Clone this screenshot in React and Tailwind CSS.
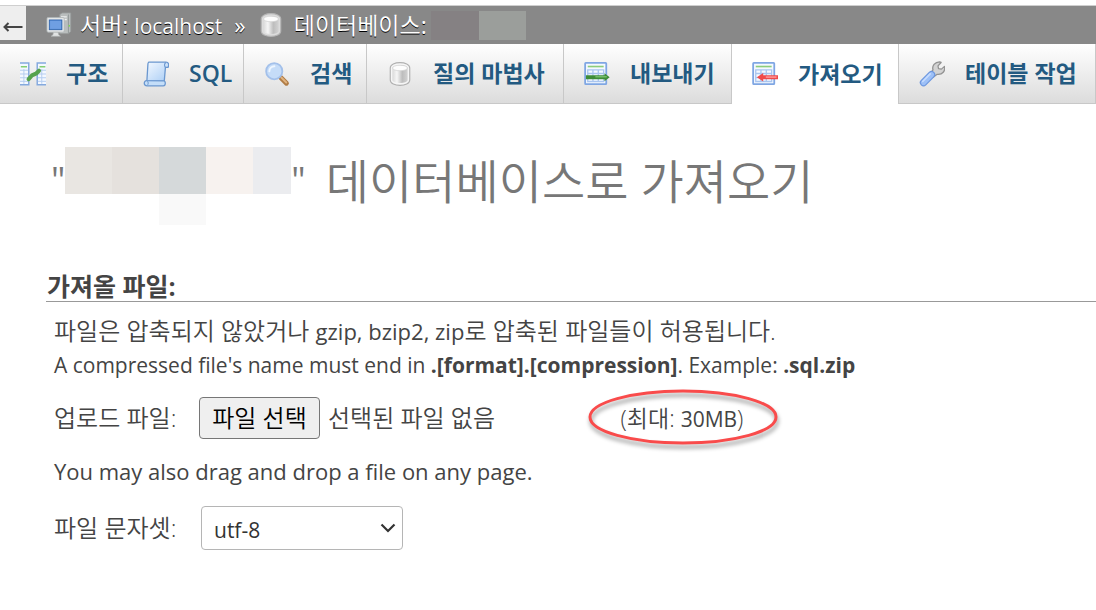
import { useRef, useState } from "react";

const ICON = "size-[26px] shrink-0";

function ServerIcon() {
  return (
    <svg viewBox="0 0 16 16" className={ICON} aria-hidden="true">
      <path d="M8.5 1.5 10 .6h5.2V12l-1.4 1.3H8.5z" fill="#b9bdbd" stroke="#9a9f9f" strokeWidth=".5" />
      <path d="M9.2 3h3.6M9.2 4.6h3.6" stroke="#eef0f0" strokeWidth=".8" />
      <path d="M13.8 1.5v11.6" stroke="#8b9191" strokeWidth=".5" />
      <path d="M13.9 8.5h.9" stroke="#7ed957" strokeWidth="1" />
      <rect x=".6" y="3.4" width="10.6" height="9" rx=".7" fill="#e6e8e8" stroke="#aeb4b6" strokeWidth=".5" />
      <rect x="2" y="4.9" width="7.8" height="6" fill="#4b83cf" stroke="#2f62a8" strokeWidth=".5" />
      <path d="M2.500 5.400h6.800v5H2.500z" fill="#6f9fe2" />
      <path d="M4.6 12.5h2.8l.4 1.5 1.1.9H3.2l1.1-.9z" fill="#e1e3e3" stroke="#b2b6b6" strokeWidth=".4" />
    </svg>
  );
}

function DatabaseIcon({ halo }) {
  return (
    <svg viewBox="0 0 16 16" className={ICON} aria-hidden="true">
      <defs>
        <linearGradient id="cyl" x1="0" x2="1" y1="0" y2="0">
          <stop offset="0" stopColor="#d9d9d9" />
          <stop offset=".3" stopColor="#f6f6f6" />
          <stop offset=".65" stopColor="#bdbdbd" />
          <stop offset="1" stopColor="#d2d2d2" />
        </linearGradient>
      </defs>
      <path
        d="M2 4.300c0-4.400 12-4.400 12 0v7.400c0 4.400-12 4.400-12 0z"
        fill={halo ? "#dcdcdc" : "#f6f6f6"}
        stroke={halo ? "#b5b5b5" : "#b0b0b0"}
        strokeWidth=".7"
      />
      <path d="M3.300 4.300c0-2.500 9.400-2.500 9.400 0v7.400c0 2.500-9.400 2.500-9.400 0z" fill="url(#cyl)" />
      <ellipse cx="8" cy="4.300" rx="4.600" ry="1.700" fill="#fdfdfd" stroke="#cdcdcd" strokeWidth=".4" />
    </svg>
  );
}

function StructureIcon() {
  return (
    <svg viewBox="0 0 16 16" className={ICON} aria-hidden="true">
      <path d="M0 1.2h5.4v13.4H0M16 1.2h-5.4v13.4H16" fill="#f3f8ff" stroke="#84a9de" strokeWidth=".9" />
      <path d="M.5 3.5h3.8M12 3.5h3.6" stroke="#83cf72" strokeWidth="1" />
      <path d="M0 5.7h5M0 8h5M0 10.3h5M0 12.5h5M11 5.7h5M11 8h5M11 10.3h5M11 12.5h5M2.4 5v9M13.4 5v9" stroke="#b4cdf0" strokeWidth=".6" />
      <path d="M5.300 11.200 7.300 8.900l2.500-1.100L11.700 6" fill="none" stroke="#56a24c" strokeWidth="2.500" strokeLinecap="round" strokeLinejoin="round" />
    </svg>
  );
}

function ScrollIcon() {
  return (
    <svg viewBox="0 0 16 16" className={ICON} aria-hidden="true">
      <defs>
        <linearGradient id="paper" x1="0" x2="1" y1="0" y2="1">
          <stop offset="0" stopColor="#f2f8ff" />
          <stop offset="1" stopColor="#a9cdf5" />
        </linearGradient>
      </defs>
      <path d="M3.500.7h10.700c1.700 0 1.900 1.800 1.200 3.200h-1.600l-.7 8.300H2.400L3 2.300C3 1.500 3.200 1 3.500.7z" fill="url(#paper)" stroke="#6a97cf" strokeWidth=".8" strokeLinejoin="round" />
      <path d="M13.800 3.900c-.9-1-.6-2.500.3-3" fill="none" stroke="#6a97cf" strokeWidth=".7" />
      <path d="M2.300 12.100c-1.900-.2-2.200 3.200.2 3.200h10c1.500 0 1.500-2.200.7-3.100z" fill="#c4def9" stroke="#6a97cf" strokeWidth=".8" strokeLinejoin="round" />
      <path d="M2.500 15c1-.7.9-2.200 0-2.800" fill="none" stroke="#6a97cf" strokeWidth=".6" />
    </svg>
  );
}

function SearchIcon() {
  return (
    <svg viewBox="0 0 16 16" className={ICON} aria-hidden="true">
      <path d="m10.300 10.200 3.500 3.500" stroke="#b07c45" strokeWidth="3" strokeLinecap="round" />
      <path d="m10.800 10.300 2.900 2.900" stroke="#e0b27e" strokeWidth="1.2" strokeLinecap="round" />
      <circle cx="6.300" cy="6.300" r="5" fill="#c5dcf8" stroke="#a3c0ea" strokeWidth="1.1" />
      <path d="M3.300 6.300a3.100 3.100 0 0 1 3.100-3.100" fill="none" stroke="#eef6ff" strokeWidth="1.2" strokeLinecap="round" />
    </svg>
  );
}

function SheetBase() {
  return (
    <>
      <rect x=".7" y="1.2" width="13" height="13" rx=".4" fill="#f5f9ff" stroke="#7fa6e3" strokeWidth="1.100" />
      <path d="M2.3 3.4h9.8" stroke="#8ccd7b" strokeWidth="1" />
      <path d="M2.3 5.4h9.8v7.2H2.3zM2.3 7.7h9.8M2.3 10.2h9.8M5.5 5.4v7.2M8.8 5.4v7.2" fill="none" stroke="#a9c5ef" strokeWidth=".8" />
    </>
  );
}

function ExportIcon() {
  return (
    <svg viewBox="0 0 16 16" className={ICON} aria-hidden="true">
      <SheetBase />
      <path d="M1.200 8.700h11.400V7.600l3.200 2.400-3.200 2.400v-1.100H1.200z" fill="#3e8d38" />
      <path d="M7 9.700h7" stroke="#7cc470" strokeWidth=".8" />
    </svg>
  );
}

function ImportIcon() {
  return (
    <svg viewBox="0 0 16 16" className={ICON} aria-hidden="true">
      <SheetBase />
      <path d="M16 8.700H6.900V7.400L3 10l3.900 2.600v-1.300H16z" fill="#f04a4a" />
      <path d="M8.500 9.900h6.600" stroke="#ff9a9a" strokeWidth=".9" />
    </svg>
  );
}

function WrenchIcon() {
  return (
    <svg viewBox="0 0 16 16" className={ICON} aria-hidden="true">
      <path d="M7 7.600 8.600 5.400C7.900 3 9.700.6 12.700.5l.9.4-1.900 2.100.3 1.700 1.800.3 1.900-1.700c.6 2.800-1.200 5.300-4.500 4.900L8.900 9.900z" fill="#d3d3d3" stroke="#939393" strokeWidth=".8" strokeLinejoin="round" />
      <path d="M2.800 13.300 7.700 8.400" stroke="#6d97de" strokeWidth="4.600" strokeLinecap="round" />
      <path d="M2.800 13.300 7.700 8.400" stroke="#9dc0f7" strokeWidth="3.200" strokeLinecap="round" />
      <path d="m2.300 12.600 4.600-4.700" stroke="#c6dcff" strokeWidth="1" strokeLinecap="round" />
    </svg>
  );
}

const TABS = [
  { label: "구조", Icon: StructureIcon },
  { label: "SQL", Icon: ScrollIcon },
  { label: "검색", Icon: SearchIcon },
  { label: "질의 마법사", Icon: DatabaseIcon },
  { label: "내보내기", Icon: ExportIcon },
  { label: "가져오기", Icon: ImportIcon, active: true },
  { label: "테이블 작업", Icon: WrenchIcon },
];

function Breadcrumb() {
  return (
    <header className="mt-[5px] flex h-[39px] items-center border-t border-[#cfcfcf] bg-[#888888] text-[23px] text-white">
      <button type="button" aria-label="탐색 패널 숨기기" className="flex h-[34px] w-[26px] items-end justify-center self-start bg-[#eeeeee] pb-2">
        <svg viewBox="0 0 20 10" className="h-2.5 w-5" fill="none" stroke="#444444" strokeWidth="2" aria-hidden="true">
          <path d="M1.500 5H19.500M5.500 1 1.500 5l4 4" />
        </svg>
      </button>
      <nav className="ml-5 flex items-center [text-shadow:0_1px_0_#000]" aria-label="경로">
        <ServerIcon />
        <a href="#server" className="ml-2 whitespace-nowrap">
          서버: <span className="text-[21px]">localhost</span>
        </a>
        <span className="mx-3">»</span>
        <DatabaseIcon halo />
        <a href="#database" className="ml-2.5 whitespace-nowrap">데이터베이스:</a>
      </nav>
      <span className="ml-1 h-[29px] w-12 bg-[#858183]" />
      <span className="h-[29px] w-[47px] bg-[#9b9e9b]" />
    </header>
  );
}

function Tabs() {
  return (
    <nav aria-label="메뉴" className="grid h-[60px] grid-cols-[123fr_121fr_123fr_197fr_168fr_167fr_197fr] text-[23px] font-semibold text-[#235a81]">
      {TABS.map(({ label, Icon, active }) => (
        <a
          key={label}
          href="#tab"
          aria-current={active ? "page" : undefined}
          className={
            active
              ? "flex items-center gap-5 whitespace-nowrap border-r border-[#c8c8c8] bg-white pl-5"
              : "flex items-center gap-5 whitespace-nowrap border-r border-b border-[#c8c8c8] bg-linear-to-b from-white to-[#dcdcdc] pl-5"
          }
        >
          <Icon />
          <span>{label}</span>
        </a>
      ))}
    </nav>
  );
}

function Title() {
  return (
    <h1 className="mt-[43px] flex h-[78px] pl-[51px] text-[47px] font-[350] text-[#777777]">
      <span className="text-[36px] leading-[66px] font-normal">"</span>
      <span className="flex items-start" aria-hidden="true">
        <span className="h-[47px] w-[47px] bg-[#e9e6e2]" />
        <span className="h-[47px] w-[47px] bg-[#e5e1dd]" />
        <span className="h-[78px] w-[47px] bg-[#f9f9f9]">
          <span className="block h-[47px] bg-[#d5d9da]" />
        </span>
        <span className="h-[47px] w-[47px] bg-[#f7f2ef]" />
        <span className="h-[47px] w-[38px] bg-[#ebecef]" />
      </span>
      <span className="text-[36px] leading-[66px] font-normal">"</span>
      <span className="ml-5 leading-[68px] whitespace-nowrap">데이터베이스로 가져오기</span>
    </h1>
  );
}

export default function App() {
  const fileRef = useRef(null);
  const [fileName, setFileName] = useState("선택된 파일 없음");

  return (
    <div className="min-h-screen overflow-x-hidden bg-white font-['Open_Sans','Noto_Sans_CJK_KR',sans-serif] text-2xl text-[#444444]">
      <Breadcrumb />
      <Tabs />
      <main>
        <Title />
        <section className="mt-[45px] ml-[46px]">
          <h2 className="h-8 border-b border-[#999999] pl-px text-[25px] font-bold leading-[32px] text-[#444444]">가져올 파일:</h2>
          <div className="pl-2">
            <p className="mt-3 h-9 leading-[34px] font-[350] whitespace-nowrap">
              파일은 압축되지 않았거나 <span className="text-[22px] font-normal">gzip, bzip2, zip</span>로 압축된 파일들이 허용됩니다.
            </p>
            <p className="h-8 text-[21px] leading-[30px] whitespace-nowrap">
              A compressed file's name must end in <b>.[format].[compression]</b>. Example: <b>.sql.zip</b>
            </p>
            <div className="mt-[8px] flex h-[56px] items-center font-[350] whitespace-nowrap">
              <label htmlFor="import-file" className="w-[145px] shrink-0">업로드 파일:</label>
              <input
                id="import-file"
                ref={fileRef}
                type="file"
                className="hidden"
                onChange={(e) => setFileName(e.target.files[0] ? e.target.files[0].name : "선택된 파일 없음")}
              />
              <button
                type="button"
                onClick={() => fileRef.current.click()}
                className="flex h-[42px] w-[121px] items-center justify-center rounded border border-[#767676] bg-[#efefef] text-black"
              >
                파일 선택
              </button>
              <span className="ml-2 w-[258px]">{fileName}</span>
              <span className="relative flex h-[56px] w-[192px] items-center justify-center text-[23px]">
                <svg viewBox="0 0 192 56" className="absolute inset-0 size-full overflow-visible" fill="none" aria-hidden="true">
                  <ellipse cx="97" cy="27" rx="93" ry="26" stroke="#f94b4b" strokeWidth="3" className="drop-shadow-[1px_4px_2px_rgba(0,0,0,0.4)]" />
                </svg>
                <span>(최대: <span className="text-[21px] font-normal">30MB</span>)</span>
              </span>
            </div>
            <p className="mt-[10px] h-8 text-[22px] leading-[30px]">You may also drag and drop a file on any page.</p>
            <div className="mt-[18px] flex items-center whitespace-nowrap">
              <label htmlFor="charset" className="w-[147px] shrink-0 font-[350]">파일 문자셋:</label>
              <span className="relative flex">
                <select id="charset" defaultValue="utf-8" className="h-11 w-[202px] appearance-none rounded border border-[#b5b5b5] bg-white pt-1 pl-3 text-[21px] text-[#333333]">
                  <option>utf-8</option>
                  <option>euc-kr</option>
                </select>
                <svg viewBox="0 0 16 10" className="pointer-events-none absolute top-[17px] right-[7px] h-2.5 w-4" fill="none" stroke="#333333" strokeWidth="2.200" aria-hidden="true">
                  <path d="m1.500 1.500 6.500 6.500 6.500-6.500" />
                </svg>
              </span>
            </div>
          </div>
        </section>
      </main>
    </div>
  );
}
